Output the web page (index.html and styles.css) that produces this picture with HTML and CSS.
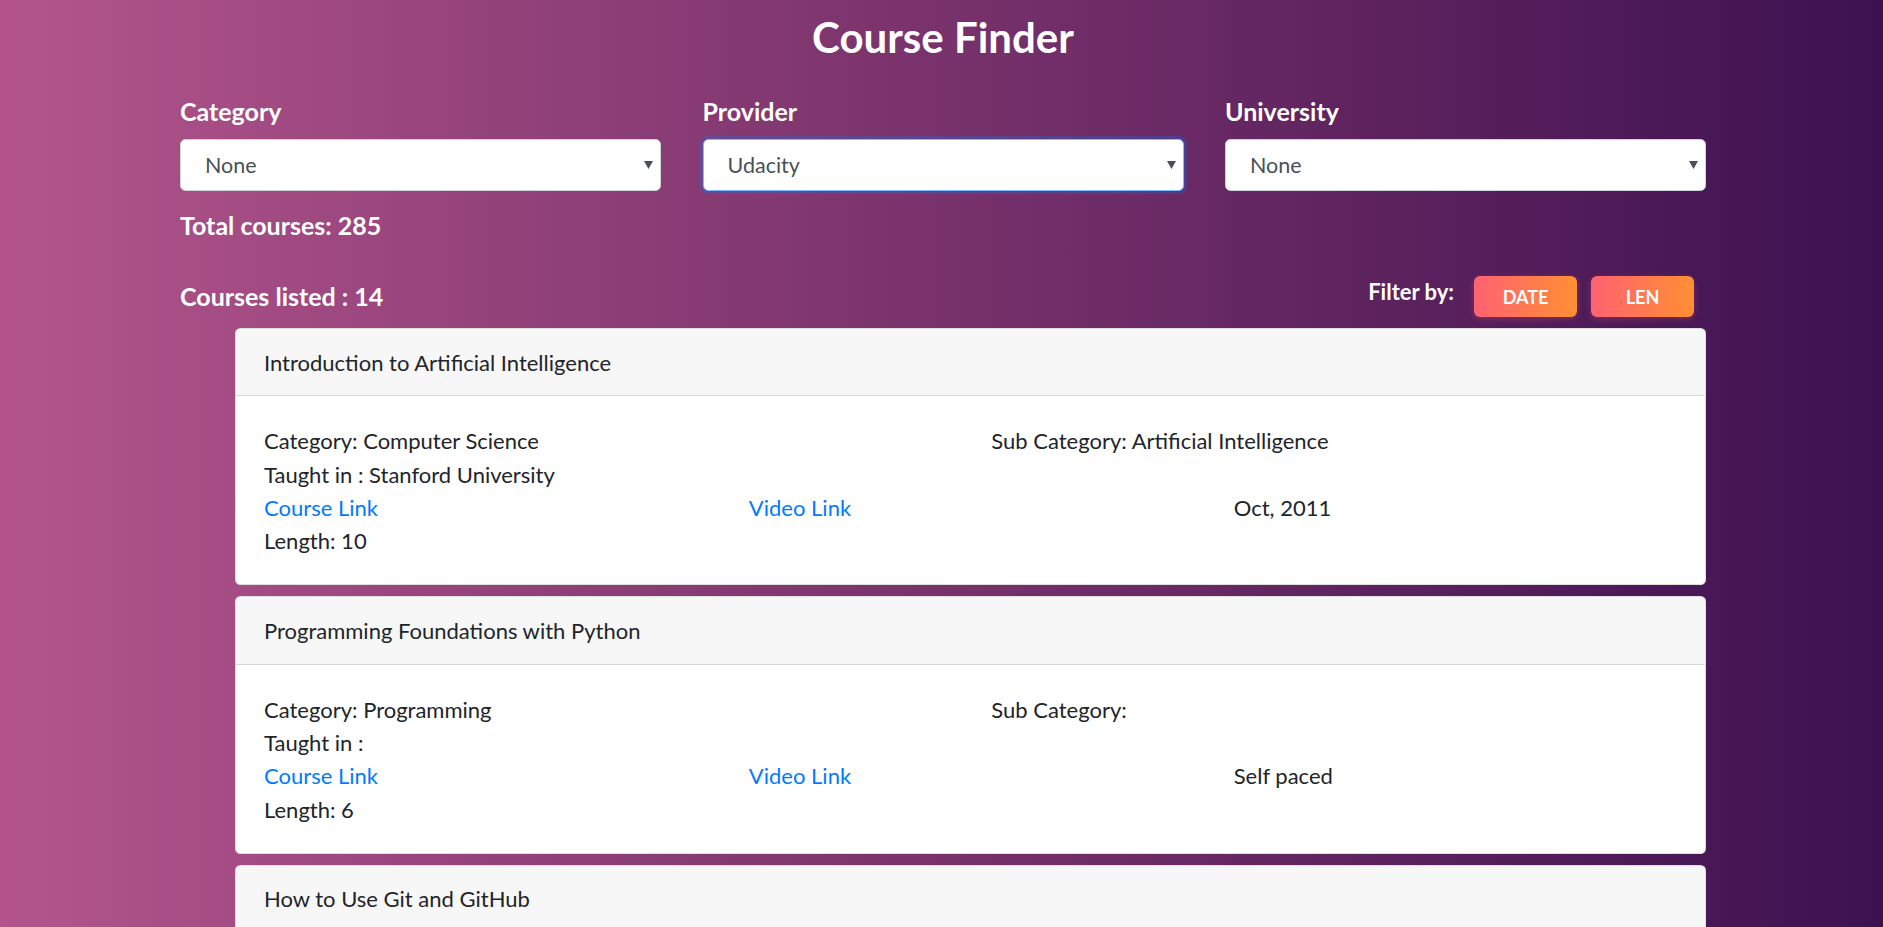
FILE: index.html
```html
<!DOCTYPE html>
<html lang="en">
<head>
<meta charset="utf-8">
<title>Course Finder</title>
<link rel="stylesheet" href="styles.css">
</head>
<body>
<main class="page">
  <h1 class="title">Course Finder</h1>
  <div class="filters">
    <div class="field">
      <label class="field-label">Category</label>
      <div class="select-wrap">
        <select class="select"><option>None</option></select>
        <svg class="caret" width="9" height="8" viewBox="0 0 9 8"><path d="M0 0H9L4.5 8Z" fill="#495057"/></svg>
      </div>
    </div>
    <div class="field">
      <label class="field-label">Provider</label>
      <div class="select-wrap">
        <select class="select select-focus"><option>Udacity</option></select>
        <svg class="caret" width="9" height="8" viewBox="0 0 9 8"><path d="M0 0H9L4.5 8Z" fill="#495057"/></svg>
      </div>
    </div>
    <div class="field">
      <label class="field-label">University</label>
      <div class="select-wrap">
        <select class="select"><option>None</option></select>
        <svg class="caret" width="9" height="8" viewBox="0 0 9 8"><path d="M0 0H9L4.5 8Z" fill="#495057"/></svg>
      </div>
    </div>
  </div>
  <div class="total">Total courses: 285</div>
  <div class="list-bar">
    <div class="listed">Courses listed : 14</div>
    <div class="filter-by">
      <span class="filter-label">Filter by:</span>
      <button class="btn">DATE</button>
      <button class="btn">LEN</button>
    </div>
  </div>
  <div class="cards">
    <div class="card">
      <div class="card-header">Introduction to Artificial Intelligence</div>
      <div class="card-body">
        <div class="half">Category: Computer Science</div>
        <div class="half">Sub Category: Artificial Intelligence</div>
        <div class="full">Taught in : Stanford University</div>
        <a class="third link" href="#">Course Link</a>
        <a class="third link" href="#">Video Link</a>
        <div class="third">Oct, 2011</div>
        <div class="full">Length: 10</div>
      </div>
    </div>
    <div class="card">
      <div class="card-header">Programming Foundations with Python</div>
      <div class="card-body">
        <div class="half">Category: Programming</div>
        <div class="half">Sub Category:</div>
        <div class="full">Taught in :</div>
        <a class="third link" href="#">Course Link</a>
        <a class="third link" href="#">Video Link</a>
        <div class="third">Self paced</div>
        <div class="full">Length: 6</div>
      </div>
    </div>
    <div class="card">
      <div class="card-header">How to Use Git and GitHub</div>
      <div class="card-body">
        <div class="half">Category: Programming</div>
        <div class="half">Sub Category:</div>
        <div class="full">Taught in :</div>
        <a class="third link" href="#">Course Link</a>
        <a class="third link" href="#">Video Link</a>
        <div class="third">Self paced</div>
        <div class="full">Length: 3</div>
      </div>
    </div>
  </div>
</main>
</body>
</html>
```

FILE: styles.css
```css
* { box-sizing: border-box; }
html, body { margin: 0; padding: 0; }
body {
  font-family: Lato, "Noto Sans", sans-serif;
  color: #212529;
  background: linear-gradient(to right, #b3558c 0%, #7e356e 45%, #3d1150 100%);
  background-attachment: fixed;
  min-height: 100vh;
}
.page {
  width: 1526px;
  margin: 0 0 0 180px;
  padding-top: 10px;
}
.title {
  margin: 0;
  text-align: center;
  color: #fff;
  font-size: 42px;
  font-weight: 700;
  line-height: 54px;
}
.filters {
  display: grid;
  grid-template-columns: repeat(3, 1fr);
  column-gap: 41.5px;
  margin-top: 30px;
}
.field-label {
  display: block;
  color: #fff;
  font-size: 25px;
  font-weight: 700;
  line-height: 34px;
  margin-bottom: 11px;
}
.select-wrap { position: relative; }
.select {
  display: block;
  width: 100%;
  height: 52px;
  appearance: none;
  -webkit-appearance: none;
  background: #fff;
  border: 1px solid #ced4da;
  border-radius: 5.5px;
  padding: 0 24px;
  font-family: inherit;
  font-size: 21.5px;
  color: #495057;
  outline: none;
}
.select-focus {
  border-color: #80bdff;
  box-shadow: 0 0 0 3px rgba(0, 123, 255, 0.25);
}
.caret {
  position: absolute;
  right: 8px;
  top: 22px;
  pointer-events: none;
}
.total {
  color: #fff;
  font-size: 25px;
  font-weight: 700;
  line-height: 34px;
  margin-top: 17px;
}
.list-bar {
  display: flex;
  justify-content: space-between;
  align-items: flex-start;
  margin-top: 34px;
}
.listed {
  color: #fff;
  font-size: 25px;
  font-weight: 700;
  line-height: 34px;
  margin-top: 3px;
}
.filter-by {
  display: flex;
  align-items: center;
  gap: 14px;
  margin-right: 12px;
}
.filter-label {
  color: #fff;
  font-size: 22px;
  font-weight: 700;
  margin-right: 6px;
  margin-top: -10px;
}
.btn {
  width: 103px;
  height: 41px;
  border: none;
  border-radius: 6px;
  background: linear-gradient(to right, #ff6272, #ff8f33);
  color: #fff;
  font-family: inherit;
  font-size: 18px;
  font-weight: 700;
  box-shadow: 0 2px 6px rgba(255, 110, 100, 0.25);
  padding: 0;
}
.cards {
  margin-left: 55px;
  margin-top: 11px;
}
.card {
  background: #fff;
  border: 1px solid rgba(0, 0, 0, 0.125);
  border-radius: 5.5px;
  margin-bottom: 11px;
  overflow: hidden;
}
.card-header {
  background: #f7f7f7;
  border-bottom: 1px solid rgba(0, 0, 0, 0.125);
  padding: 16.5px 28px;
  font-size: 22px;
  line-height: 33.3px;
}
.card-body {
  padding: 28px 28px 27px;
  display: grid;
  grid-template-columns: repeat(6, 1fr);
  column-gap: 41.6px;
  font-size: 22px;
  line-height: 33.3px;
}
.half { grid-column: span 3; }
.third { grid-column: span 2; }
.full { grid-column: span 6; }
.link { color: #007bff; text-decoration: none; }
```
